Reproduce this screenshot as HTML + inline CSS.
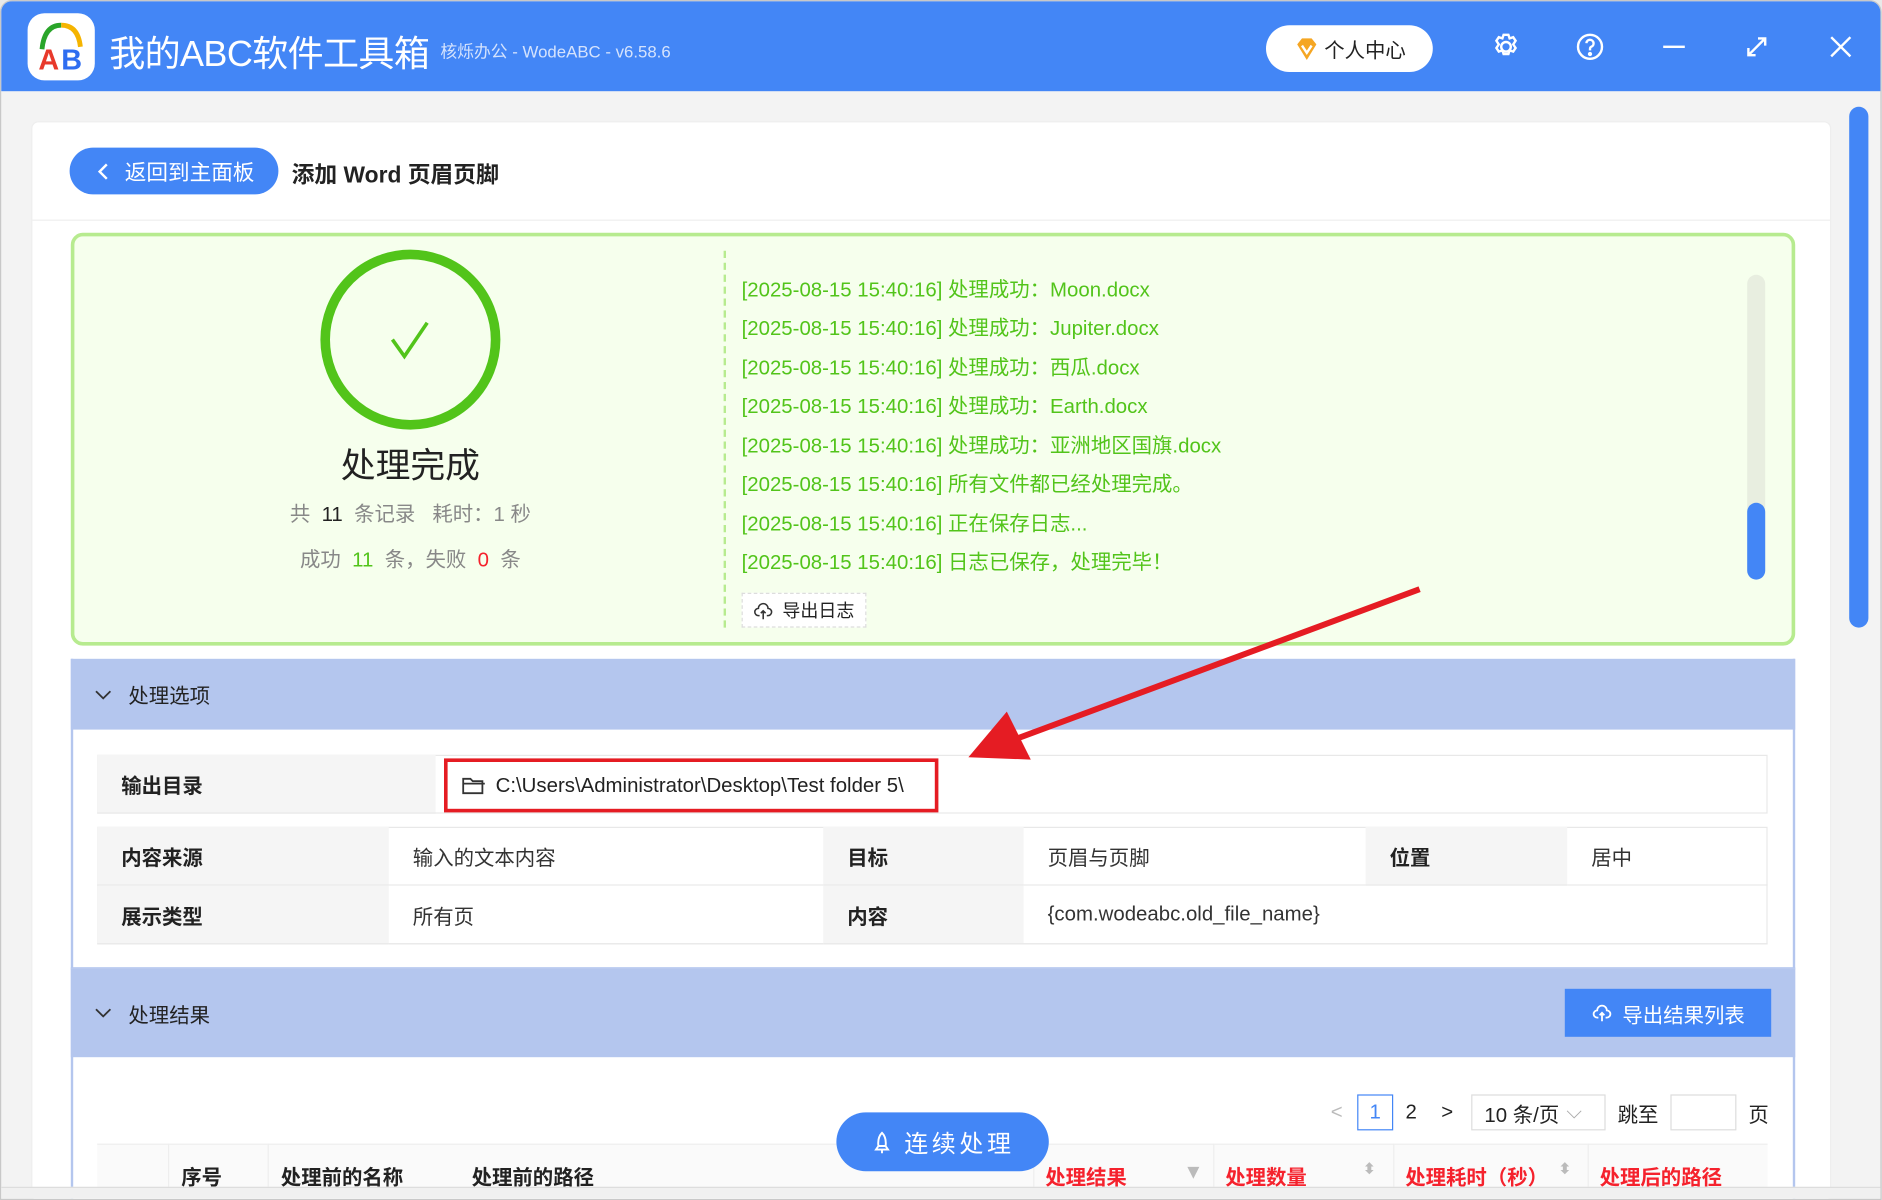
<!DOCTYPE html>
<html><head><meta charset="utf-8"><style>
*{box-sizing:border-box;margin:0;padding:0}
html,body{width:1882px;height:1200px;overflow:hidden;background:#e9e9e9}
#w{width:1568px;height:1000px;transform:scale(1.2);transform-origin:0 0;position:relative;font-family:"Liberation Sans","Noto Sans CJK SC",sans-serif;color:#222;background:#f3f3f3;border-radius:10px 10px 0 0;overflow:hidden;border:1px solid #c8c8c8}
.a{position:absolute}
.tb{left:0;top:0;width:1568px;height:75px;background:#4386f6}
.lh{display:flex;align-items:center}
.cell{position:absolute;display:flex;align-items:center;font-size:17px;border-bottom:1px solid #e8e8e8}
.lab{background:#f5f5f5;font-weight:bold;padding-left:20px}
.val{padding-left:20px;color:#333}
.log{position:absolute;left:617px;font-size:17px;color:#52c41a;white-space:nowrap}
</style></head><body><div id="w">
<div class="a tb"></div>
<div class="a" style="left:22px;top:10px;width:56px;height:56px;background:#fff;border-radius:14px">
<svg width="56" height="56" viewBox="0 0 56 56"><path d="M12 30 Q14 10 28 10" stroke="#2aa52a" stroke-width="4" fill="none"/><path d="M28 10 Q42 10 44 28" stroke="#f5b400" stroke-width="4" fill="none"/><text x="9" y="47" font-size="24" font-weight="bold" fill="#e8392b" font-family="Liberation Sans">A</text><text x="28" y="47" font-size="24" font-weight="bold" fill="#2f6df0" font-family="Liberation Sans">B</text></svg></div>
<div class="a" style="left:90px;top:19px;font-size:30px;color:#fff;white-space:nowrap;letter-spacing:-0.5px">我的ABC软件工具箱</div>
<div class="a" style="left:366px;top:32px;font-size:14px;color:#d5e3fd;white-space:nowrap">核烁办公 - WodeABC - v6.58.6</div>
<div class="a lh" style="left:1054px;top:20px;width:139px;height:39px;background:#fff;border-radius:20px;font-size:17px;justify-content:center;gap:4px"><svg width="22" height="22" viewBox="0 0 22 22"><path d="M3 7 L7 2 H15 L19 7 L11 20Z" fill="#f5a623"/><path d="M7 8 L11 14 L15 8" stroke="#fff" stroke-width="2" fill="none"/></svg>个人中心</div>
<svg class="a" style="left:1240px;top:24px" width="28" height="28" viewBox="0 0 28 28" fill="none" stroke="#fff" stroke-width="2"><circle cx="14" cy="14" r="4"/><path d="M12 4h4l1 3 3-1 2 3-2 3 2 3-2 3-3-1-1 3h-4l-1-3-3 1-2-3 2-3-2-3 2-3 3 1z"/></svg>
<svg class="a" style="left:1310px;top:24px" width="28" height="28" viewBox="0 0 28 28" fill="none" stroke="#fff" stroke-width="2"><circle cx="14" cy="14" r="10"/><path d="M11 11a3 3 0 1 1 4 3c-1 .5-1 1-1 3"/><circle cx="14" cy="20" r=".8" fill="#fff"/></svg>
<div class="a" style="left:1385px;top:37px;width:18px;height:2px;background:#fff"></div>
<svg class="a" style="left:1452px;top:27px" width="22" height="22" viewBox="0 0 22 22" stroke="#fff" stroke-width="2" fill="none"><path d="M4 18 L18 4 M12 4h6v6 M4 12v6h6"/></svg>
<svg class="a" style="left:1523px;top:28px" width="20" height="20" stroke="#fff" stroke-width="2"><path d="M2 2L18 18M18 2L2 18"/></svg>
<div class="a" style="left:25px;top:100px;width:1500px;height:900px;background:#fff;border:1px solid #eee;border-radius:6px"></div>
<div class="a" style="left:1540px;top:88px;width:16px;height:434px;background:#4386f6;border-radius:8px"></div>
<div class="a lh" style="left:57px;top:122px;width:174px;height:39px;background:#4386f6;border-radius:20px;color:#fff;font-size:18px;padding-left:22px;gap:12px"><svg width="12" height="16" viewBox="0 0 12 16" fill="none" stroke="#fff" stroke-width="2"><path d="M9 2L3 8L9 14"/></svg>返回到主面板</div>
<div class="a" style="left:242px;top:130px;font-size:19px;font-weight:bold">添加 Word 页眉页脚</div>
<div class="a" style="left:26px;top:182px;width:1498px;height:1px;background:#eee"></div>
<div class="a" style="left:58px;top:193px;width:1437px;height:344px;background:#f6ffed;border:3px solid #b7eb8f;border-radius:10px"></div>
<svg class="a" style="left:263px;top:204px" width="156" height="156"><circle cx="78" cy="78" r="71" fill="none" stroke="#52c41a" stroke-width="8"/><path d="M63 78 L73 92 L92 64" fill="none" stroke="#52c41a" stroke-width="3"/></svg>
<div class="a" style="left:241px;top:364px;width:200px;text-align:center;font-size:29px">处理完成</div>
<div class="a" style="left:191px;top:413px;width:300px;text-align:center;font-size:17px;color:#888">共 &nbsp;<span style="color:#222">11</span>&nbsp; 条记录 &nbsp; 耗时：1 秒</div>
<div class="a" style="left:191px;top:451px;width:300px;text-align:center;font-size:17px;color:#888">成功 &nbsp;<span style="color:#52c41a">11</span>&nbsp; 条，失败 &nbsp;<span style="color:#f5222d">0</span>&nbsp; 条</div>
<div class="a" style="left:602px;top:208px;height:314px;border-left:2px dashed #b7eb8f"></div>
<div class="log" style="top:226px">[2025-08-15 15:40:16] 处理成功：Moon.docx</div>
<div class="log" style="top:258px">[2025-08-15 15:40:16] 处理成功：Jupiter.docx</div>
<div class="log" style="top:291px">[2025-08-15 15:40:16] 处理成功：西瓜.docx</div>
<div class="log" style="top:323px">[2025-08-15 15:40:16] 处理成功：Earth.docx</div>
<div class="log" style="top:356px">[2025-08-15 15:40:16] 处理成功：亚洲地区国旗.docx</div>
<div class="log" style="top:388px">[2025-08-15 15:40:16] 所有文件都已经处理完成。</div>
<div class="log" style="top:421px">[2025-08-15 15:40:16] 正在保存日志...</div>
<div class="log" style="top:453px">[2025-08-15 15:40:16] 日志已保存，处理完毕！</div>
<div class="a" style="left:1455px;top:228px;width:15px;height:254px;background:#e8eee0;border-radius:8px"></div>
<div class="a" style="left:1455px;top:418px;width:15px;height:64px;background:#4386f6;border-radius:8px"></div>
<div class="a lh" style="left:617px;top:493px;width:104px;height:29px;background:#fff;border:1px dashed #ddd;font-size:15px;gap:8px;padding-left:9px"><svg width="16" height="16" viewBox="0 0 16 16" fill="none" stroke="#333" stroke-width="1.3"><path d="M5 12H4a3 3 0 0 1 0-6 4 4 0 0 1 8 0 3 3 0 0 1 0 6h-1M8 8v7M6 10l2-2 2 2"/></svg>导出日志</div>
<div class="a" style="left:58px;top:548px;width:1437px;height:259px;border:2px solid #b4c6ee;border-top:0;background:#fff"></div>
<div class="a lh" style="left:58px;top:548px;width:1437px;height:59px;background:#b4c6ee;font-size:17px;padding-left:20px;gap:14px"><svg width="14" height="10" fill="none" stroke="#333" stroke-width="1.5"><path d="M1 2L7 8L13 2"/></svg>处理选项</div>
<div class="a" style="left:80px;top:628px;width:1392px;height:49px;border:1px solid #e8e8e8"></div>
<div class="cell lab" style="left:80px;top:628px;width:282px;height:49px">输出目录</div>
<div class="a lh" style="left:369px;top:631px;width:412px;height:45px;border:3px solid #e51c23;font-size:17px;padding-left:12px;gap:8px"><svg width="20" height="16" viewBox="0 0 20 16" fill="none" stroke="#333" stroke-width="1.5"><path d="M1 2h6l2 2h8v10H1z M1 6h18"/></svg>C:\Users\Administrator\Desktop\Test folder 5\</div>
<div class="a" style="left:80px;top:688px;width:1392px;height:98px;border:1px solid #e8e8e8"></div>
<div class="cell lab" style="left:80px;top:688px;width:243px;height:49px">内容来源</div>
<div class="cell val" style="left:323px;top:688px;width:362px;height:49px">输入的文本内容</div>
<div class="cell lab" style="left:685px;top:688px;width:167px;height:49px">目标</div>
<div class="cell val" style="left:852px;top:688px;width:285px;height:49px">页眉与页脚</div>
<div class="cell lab" style="left:1137px;top:688px;width:168px;height:49px">位置</div>
<div class="cell val" style="left:1305px;top:688px;width:167px;height:49px">居中</div>
<div class="cell lab" style="left:80px;top:737px;width:243px;height:49px">展示类型</div>
<div class="cell val" style="left:323px;top:737px;width:362px;height:49px">所有页</div>
<div class="cell lab" style="left:685px;top:737px;width:167px;height:49px">内容</div>
<div class="cell val" style="left:852px;top:737px;width:620px;height:49px">{com.wodeabc.old_file_name}</div>
<div class="a" style="left:58px;top:806px;width:1437px;height:200px;border:2px solid #b4c6ee;border-top:0;background:#fff"></div>
<div class="a lh" style="left:58px;top:806px;width:1437px;height:74px;background:#b4c6ee;font-size:17px;padding-left:20px;gap:14px"><svg width="14" height="10" fill="none" stroke="#333" stroke-width="1.5"><path d="M1 2L7 8L13 2"/></svg>处理结果</div>
<div class="a lh" style="left:1303px;top:823px;width:172px;height:40px;background:#4386f6;color:#fff;font-size:17px;justify-content:center;gap:8px"><svg width="18" height="16" viewBox="0 0 16 16" fill="none" stroke="#fff" stroke-width="1.5"><path d="M5 12H4a3 3 0 0 1 0-6 4 4 0 0 1 8 0 3 3 0 0 1 0 6h-1M8 8v7M6 10l2-2 2 2"/></svg>导出结果列表</div>
<div class="a lh" style="left:1108px;top:911px;font-size:17px;gap:0;height:30px">
<span style="color:#bbb;width:22px">&lt;</span><span style="border:1px solid #4386f6;color:#4386f6;width:30px;height:30px;display:flex;align-items:center;justify-content:center">1</span><span style="width:30px;text-align:center">2</span><span style="width:30px;text-align:center">&gt;</span><span style="border:1px solid #ddd;width:112px;height:30px;display:flex;align-items:center;padding-left:10px;margin-left:5px">10 条/页 <span style="color:#aaa;margin-left:6px">⌵</span></span><span style="margin:0 10px">跳至</span><span style="border:1px solid #ddd;width:55px;height:30px"></span><span style="margin-left:10px">页</span></div>
<div class="a" style="left:80px;top:952px;width:1392px;height:40px;background:#fafafa;border-top:1px solid #eee"></div>
<div class="a" style="left:139px;top:952px;width:1px;height:40px;background:#eee"></div>
<div class="a" style="left:222px;top:952px;width:1px;height:40px;background:#eee"></div>
<div class="a" style="left:860px;top:952px;width:1px;height:40px;background:#eee"></div>
<div class="a" style="left:1010px;top:952px;width:1px;height:40px;background:#eee"></div>
<div class="a" style="left:1160px;top:952px;width:1px;height:40px;background:#eee"></div>
<div class="a" style="left:1322px;top:952px;width:1px;height:40px;background:#eee"></div>
<div class="a" style="left:80px;top:966px;font-size:17px;font-weight:bold;white-space:nowrap">
<span class="a" style="left:70px">序号</span><span class="a" style="left:153px">处理前的名称</span><span class="a" style="left:312px">处理前的路径</span><span class="a" style="left:790px;color:#f5222d">处理结果</span><span class="a" style="left:905px;color:#bbb">▼</span><span class="a" style="left:940px;color:#f5222d">处理数量</span><span class="a" style="left:1055px;color:#bbb;font-size:12px">⬍</span><span class="a" style="left:1090px;color:#f5222d">处理耗时（秒）</span><span class="a" style="left:1218px;color:#bbb;font-size:12px">⬍</span><span class="a" style="left:1252px;color:#f5222d">处理后的路径</span></div>
<div class="a lh" style="left:696px;top:926px;width:177px;height:49px;background:#4386f6;border-radius:25px;color:#fff;font-size:20px;justify-content:center;gap:10px;letter-spacing:3px"><svg width="18" height="20" viewBox="0 0 18 20" fill="none" stroke="#fff" stroke-width="1.6"><path d="M9 2C6 5 5.5 9 6 13h6c.5-4 0-8-3-11zM6 13l-2 3h10l-2-3M9 16v3"/></svg>连续处理</div>
<div class="a" style="left:0;top:988px;width:1568px;height:12px;background:#f0f0f0;border-top:1px solid #ddd"></div>
<svg class="a" style="left:0;top:0" width="1568" height="1000"><line x1="1182" y1="490" x2="845" y2="615" stroke="#e51c23" stroke-width="5"/><polygon points="806,630 838,592 858,632" fill="#e51c23"/></svg>
</div></body></html>
